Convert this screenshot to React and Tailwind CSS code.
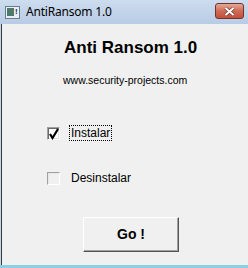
export default function App() {
  return (
    <div className="w-[248px] h-[268px] flex flex-col bg-[#c2d5ea] overflow-hidden">
      {/* title bar */}
      <div className="h-[24px] flex items-center bg-gradient-to-b from-[#cddcee] to-[#b8cce5] relative">
        <div className="ml-[5px] w-[15px] h-[13px] border border-[#6b7c8c] bg-[#e8eef4] flex items-center px-[1px]">
          <div className="w-[7px] h-[8px] bg-[#4d7a6c]"></div>
          <div className="ml-[1px] text-[8px] leading-none font-bold text-[#203040] font-['Liberation_Sans',sans-serif]">!</div>
        </div>
        <div className="ml-[6px] text-[12px] text-black font-['Noto_Sans',sans-serif] tracking-[-0.2px]">AntiRansom 1.0</div>
        <div className="absolute left-[215px] top-[3px] w-[29px] h-[16px] rounded-[3px] border border-[#6e3530] bg-gradient-to-b from-[#e3a996] via-[#cf6a55] to-[#c0503a] flex items-center justify-center">
          <svg width="11" height="9" viewBox="0 0 11 9">
            <path d="M1.5 1 L9.5 8 M9.5 1 L1.5 8" stroke="#6a3028" strokeWidth="3.2" />
            <path d="M1.5 1 L9.5 8 M9.5 1 L1.5 8" stroke="#ffffff" strokeWidth="2" />
          </svg>
        </div>
      </div>
      {/* client area */}
      <div className="flex-1 flex ml-[1px]">
        <div className="w-[1px] bg-[#3a3a3a]"></div>
        <div className="flex-1 flex flex-col bg-[#f0f0f0] font-['Liberation_Sans',sans-serif] text-black">
          <div className="h-[14px]"></div>
          <div className="pl-[62px] text-[17px] font-bold leading-[20px]">Anti Ransom 1.0</div>
          <div className="h-[15px]"></div>
          <div className="pl-[61px] text-[10.5px] leading-[14px]">www.security-projects.com</div>
          <div className="h-[38px]"></div>
          <div className="flex items-center h-[16px]">
            <div className="ml-[45px] w-[13px] h-[13px] border-t border-l border-[#a0a0a0] border-b border-r border-b-white border-r-white bg-white relative shadow-[inset_1px_1px_0_#696969,inset_-1px_-1px_0_#e3e3e3]">
              <svg className="absolute left-[0px] top-[0px]" width="12" height="12" viewBox="0 0 12 12">
                <path d="M2 6 L4.5 10 L10 1" stroke="#000" strokeWidth="2.2" fill="none" />
              </svg>
            </div>
            <div className="ml-[9px] border border-dotted border-black px-[1px] text-[12px] leading-[14px]">Instalar</div>
          </div>
          <div className="h-[29px]"></div>
          <div className="flex items-center h-[16px]">
            <div className="ml-[45px] w-[13px] h-[13px] border-t border-l border-[#a0a0a0] border-b border-r border-b-white border-r-white bg-[#f0f0f0] shadow-[inset_1px_1px_0_#e8e8e8]"></div>
            <div className="ml-[10px] px-[1px] text-[12px] leading-[14px]">Desinstalar</div>
          </div>
          <div className="h-[31px]"></div>
          <div className="ml-[81px] w-[96px] h-[35px] border-t border-l border-white border-b border-r border-b-[#555] border-r-[#555] shadow-[inset_-1px_-1px_0_#a0a0a0] flex items-center justify-center text-[14px] font-bold">Go !</div>
          <div className="flex-1"></div>
          <div className="h-[3px] bg-[#8ccfe3] -ml-[2px]"></div>
        </div>
      </div>
    </div>
  );
}
